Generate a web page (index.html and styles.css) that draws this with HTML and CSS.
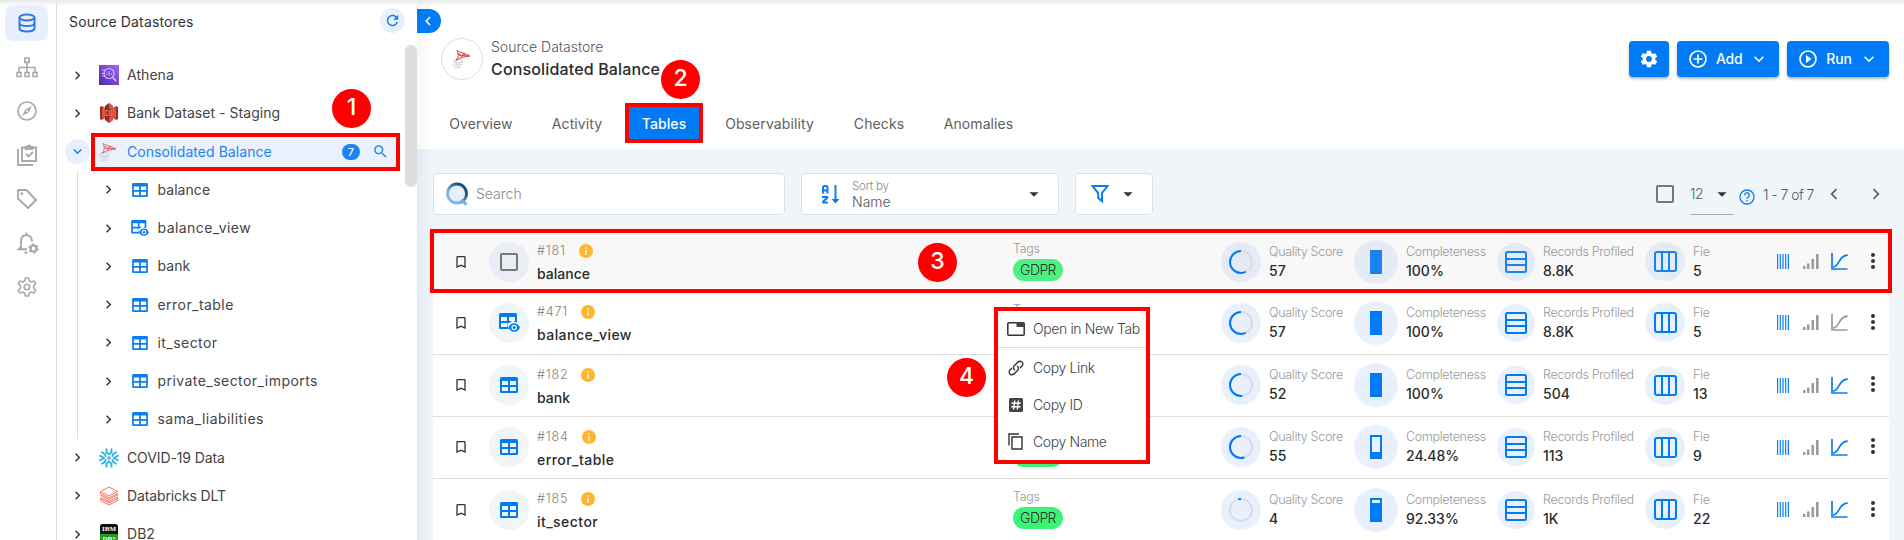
FILE: index.html
```html
<!DOCTYPE html>
<html lang="en">
<head>
<meta charset="utf-8">
<title>Consolidated Balance - Tables</title>
<link rel="stylesheet" href="styles.css">
</head>
<body>
<svg class="defs" aria-hidden="true">
  <symbol id="right" viewBox="0 0 24 24"><path d="M8.59,16.58L13.17,12L8.59,7.41L10,6L16,12L10,18Z"/></symbol>
  <symbol id="left" viewBox="0 0 24 24"><path d="M15.41,16.58L10.83,12L15.41,7.41L14,6L8,12L14,18Z"/></symbol>
  <symbol id="down" viewBox="0 0 24 24"><path d="M7.41,8.58L12,13.17L16.59,8.58L18,10L12,16L6,10Z"/></symbol>
  <symbol id="caret" viewBox="0 0 24 24"><path d="M7,10L12,15L17,10Z"/></symbol>
  <symbol id="cog" viewBox="0 0 24 24"><path d="M12,15.5A3.5,3.5 0 0,1 8.5,12A3.5,3.5 0 0,1 12,8.5A3.5,3.5 0 0,1 15.5,12A3.5,3.5 0 0,1 12,15.5M19.43,12.97C19.47,12.65 19.5,12.33 19.5,12C19.5,11.67 19.47,11.34 19.43,11L21.54,9.37C21.73,9.22 21.78,8.95 21.66,8.73L19.66,5.27C19.54,5.05 19.27,4.96 19.05,5.05L16.56,6.05C16.04,5.66 15.5,5.32 14.87,5.07L14.5,2.42C14.46,2.18 14.25,2 14,2H10C9.75,2 9.54,2.18 9.5,2.42L9.13,5.07C8.5,5.32 7.96,5.66 7.44,6.05L4.95,5.05C4.73,4.96 4.46,5.05 4.34,5.27L2.34,8.73C2.21,8.95 2.27,9.22 2.46,9.37L4.57,11C4.53,11.34 4.5,11.67 4.5,12C4.5,12.33 4.53,12.65 4.57,12.97L2.46,14.63C2.27,14.78 2.21,15.05 2.34,15.27L4.34,18.73C4.46,18.95 4.73,19.03 4.95,18.95L7.44,17.94C7.96,18.34 8.5,18.68 9.13,18.93L9.5,21.58C9.54,21.82 9.75,22 10,22H14C14.25,22 14.46,21.82 14.5,21.58L14.87,18.93C15.5,18.67 16.04,18.34 16.56,17.94L19.05,18.95C19.27,19.03 19.54,18.95 19.66,18.73L21.66,15.27C21.78,15.05 21.73,14.78 21.54,14.63L19.43,12.97Z"/></symbol>
  <symbol id="magnify" viewBox="0 0 24 24"><path d="M9.5,3A6.5,6.5 0 0,1 16,9.5C16,11.11 15.41,12.59 14.44,13.73L14.71,14H15.5L20.5,19L19,20.5L14,15.5V14.71L13.73,14.44C12.59,15.41 11.11,16 9.5,16A6.5,6.5 0 0,1 3,9.5A6.5,6.5 0 0,1 9.5,3M9.5,5C7,5 5,7 5,9.5C5,12 7,14 9.5,14C12,14 14,12 14,9.5C14,7 12,5 9.5,5Z"/></symbol>
  <symbol id="refresh" viewBox="0 0 24 24"><path d="M17.65,6.35C16.2,4.9 14.21,4 12,4A8,8 0 0,0 4,12A8,8 0 0,0 12,20C15.73,20 18.84,17.45 19.73,14H17.65C16.83,16.33 14.61,18 12,18A6,6 0 0,1 6,12A6,6 0 0,1 12,6C13.66,6 15.14,6.69 16.22,7.78L13,11H20V4L17.65,6.35Z"/></symbol>
  <symbol id="bookmark" viewBox="0 0 24 24"><path d="M17,18L12,15.82L7,18V5H17M17,3H7A2,2 0 0,0 5,5V21L12,18L19,21V5C19,3.89 18.1,3 17,3Z"/></symbol>
  <symbol id="table" viewBox="0 0 18 16"><path fill-rule="evenodd" d="M1.5,0H16.500A1.500,1.500 0 0,1 18,1.500V14.500A1.500,1.500 0 0,1 16.500,16H1.500A1.500,1.500 0 0,1 0,14.500V1.500A1.500,1.500 0 0,1 1.500,0ZM2,4V8H8V4ZM10,4V8H16V4ZM2,10V14H8V10ZM10,10V14H16V10Z"/></symbol>
  <symbol id="view" viewBox="0 0 21 19"><path fill-rule="evenodd" d="M1.5,0H16.500A1.500,1.500 0 0,1 18,1.500V9.500C17,9 16,8.800 15,8.800V8H16V4H10V8H13L10,10H8.500V14H9L10,16H1.500A1.500,1.500 0 0,1 0,14.500V1.500A1.500,1.500 0 0,1 1.500,0ZM2,4V8H8V4ZM2,10V14H8V10Z"/><path fill-rule="evenodd" d="M15.200,10.200C12.600,10.200 10.400,11.900 9.400,14.500C10.400,17.100 12.600,18.800 15.200,18.800S20,17.100 21,14.500C20,11.900 17.800,10.200 15.200,10.200M15.200,17.300A2.800,2.800 0 1,1 15.200,11.700A2.800,2.800 0 0,1 15.200,17.300"/><circle cx="15.200" cy="14.500" r="1.500"/></symbol>
  <symbol id="box" viewBox="0 0 18 18"><rect x="1" y="1" width="16" height="16" rx="1" fill="none" stroke="currentColor" stroke-width="2"/></symbol>
  <symbol id="info" viewBox="0 0 14 14"><circle cx="7" cy="7" r="7"/><path fill="#fff" d="M6.300,3.300h1.400v1.500H6.300zM6.300,6.100h1.400v4.600H6.300z"/></symbol>
  <symbol id="records" viewBox="0 0 22 22"><g fill="none" stroke="currentColor" stroke-width="2"><rect x="1" y="1" width="20" height="20" rx="1.500"/><path d="M1,8H21M1,14H21"/></g></symbol>
  <symbol id="fields" viewBox="0 0 23 21"><g fill="none" stroke="currentColor" stroke-width="2"><rect x="1" y="1" width="21" height="19" rx="2"/><path d="M8,1V20M15,1V20"/></g></symbol>
  <symbol id="bars" viewBox="0 0 12 15"><path fill="none" stroke="currentColor" stroke-width="1.200" d="M.6,0V15M3.300,0V15M6,0V15M8.700,0V15M11.400,0V15"/></symbol>
  <symbol id="signal" viewBox="0 0 16 15"><path d="M0,12h2.500v3H0zM4,9.500h2.500V15H4zM8.500,5H11V15H8.500zM13,0h2.600v15H13z"/></symbol>
  <symbol id="chart" viewBox="0 0 17 17"><path fill="none" stroke="currentColor" stroke-width="1.700" d="M1,0V16H16.500M2,14C8.500,14 7.500,2.200 16.800,2.200"/></symbol>
  <symbol id="dots" viewBox="0 0 4 16"><circle cx="2" cy="2" r="2"/><circle cx="2" cy="8" r="2"/><circle cx="2" cy="14" r="2"/></symbol>
  <symbol id="mssql" viewBox="0 0 20 20"><g fill="none" stroke="#c9cdd0"><ellipse cx="6" cy="12" rx="4" ry="2"/><path stroke-dasharray="2 .8" d="M2,12.500C2,14 1,17 2,18S7,19.500 9,17.500C10,16 10,14 10.500,12M4,14L5.500,18M3,16.500L8,15M6.500,19L8.500,13.500"/></g><path fill="none" stroke="#d6454b" stroke-width="1" d="M5,1.500C8,3.500 13,4 18,7C13,7.500 8,8.500 4,11.500C7,8 6.500,4.500 5,1.500ZM7,4L10,8L11,4.200L14,7.500M6,6L17,7"/></symbol>
  <symbol id="snow" viewBox="0 0 20 20"><g fill="none" stroke="#29b5e8" stroke-width="1.900" stroke-linecap="round" stroke-linejoin="round"><path d="M7.500,1.200V4.500L10,6.300L12.500,4.500V1.200M7.500,18.800V15.500L10,13.700L12.500,15.500V18.800M1.200,7.800L5,10L1.200,12.200M18.800,7.800L15,10L18.800,12.200M3,4.200L6,6.200L6.500,8M17,4.200L14,6.200L13.500,8M3,15.800L6,13.800L6.500,12M17,15.800L14,13.800L13.500,12"/></g><rect x="8.900" y="8.900" width="2.200" height="2.200" transform="rotate(45 10 10)" fill="none" stroke="#29b5e8"/></symbol>
</svg>
<div class="app">
  <nav class="rail">
    <a class="rail-item active"><svg width="18" height="20" viewBox="0 0 18 20"><g fill="none" stroke="currentColor" stroke-width="2"><ellipse cx="9" cy="4.500" rx="7.500" ry="3"/><path d="M1.500,4.500V15.500C1.500,17.200 4.800,18.500 9,18.500S16.500,17.200 16.500,15.500V4.500M1.500,10C1.500,11.800 4.800,13 9,13S16.500,11.800 16.500,10"/></g></svg></a>
    <a class="rail-item"><svg width="22" height="21" viewBox="0 0 22 21"><path fill="none" stroke="currentColor" stroke-width="1.600" d="M8.800,1h4.400v4.400H8.800zM1,15.500h4v4H1zM9,15.500h4v4H9zM17,15.500h4v4h-4zM11,5.500V15.500M3,15.500V10.500H19V15.500"/></svg></a>
    <a class="rail-item"><svg width="20" height="20" viewBox="0 0 20 20"><circle cx="10" cy="10" r="9" fill="none" stroke="currentColor" stroke-width="1.700"/><path fill-rule="evenodd" d="M15,5L11.600,11.600L5,15L8.400,8.400ZM10,9A1,1 0 1,0 10,11A1,1 0 0,0 10,9"/></svg></a>
    <a class="rail-item"><svg width="20" height="22" viewBox="0 0 20 22"><g fill="none" stroke="currentColor" stroke-width="1.900"><path d="M8.500,3.500H5V17H19V3.500H15.500M1,5V21H16M9,9.800L11.500,12.300L16,7.800"/><rect x="8.700" y="3" width="6.600" height="2"/><path d="M10.500,3A1.500,1.500 0 0,1 13.500,3"/></g></svg></a>
    <a class="rail-item"><svg width="20" height="20" viewBox="0 0 20 20"><path fill="none" stroke="currentColor" stroke-width="1.900" stroke-linejoin="round" d="M1,1H9.500L19,11L11,19L1,9.500Z"/><circle cx="4.700" cy="4.700" r="1.400"/></svg></a>
    <a class="rail-item bell"><svg width="22" height="22" viewBox="0 0 22 22"><path fill="none" stroke="currentColor" stroke-width="1.900" d="M10,17.300H1.800L4,15V9C4,5 6.200,3.200 9.500,3.200S14.800,5.500 15,9.500M9.500,3V.5M7.800,19.500C8.200,20.800 9.500,21.200 10.500,20.500"/><circle cx="16.500" cy="16.500" r="3" fill="none" stroke="currentColor" stroke-width="2.200"/><circle cx="16.500" cy="16.500" r="4.400" fill="none" stroke="currentColor" stroke-width="1.500" stroke-dasharray="2.300 2.300"/></svg></a>
    <a class="rail-item"><svg width="20" height="20" viewBox="1.500 1.500 21 21"><path fill="none" stroke="currentColor" stroke-width="1.700" stroke-linejoin="round" d="M10.300,2.600H13.700L14.300,5.500L16.500,6.800L19.500,5.800L21.200,8.600L19,10.600V13.400L21.200,15.400L19.500,18.200L16.500,17.200L14.300,18.500L13.700,21.400H10.300L9.700,18.500L7.500,17.200L4.500,18.200L2.800,15.400L5,13.400V10.600L2.800,8.600L4.500,5.800L7.500,6.800L9.700,5.500Z"/><circle cx="12" cy="12" r="2.900" fill="none" stroke="currentColor" stroke-width="1.700"/></svg></a>
  </nav>

  <aside class="side">
    <div class="side-head"><span class="side-title">Source Datastores</span><span class="round"><svg width="17" height="17"><use href="#refresh"/></svg></span></div>
    <div class="tree">
      <div class="node"><svg class="chev"><use href="#right"/></svg><svg class="logo" viewBox="0 0 20 20"><defs><linearGradient id="ath" x1="0" y1="1" x2="1" y2="0"><stop offset="0" stop-color="#4d27a8"/><stop offset="1" stop-color="#a166ff"/></linearGradient></defs><path fill="url(#ath)" d="M0,0H20V20H0z"/><g fill="none" stroke="#d9c8ff"><circle cx="10" cy="8.500" r="5" stroke-width="1.100"/><path stroke-width="1.600" d="M13.700,12.500L17,16"/><path stroke-width=".8" d="M3,5H6M2.500,8.500H6M3,11H6M8,10V7.500M10,11V6M12,10V8"/></g></svg><span>Athena</span></div>
      <div class="node"><svg class="chev"><use href="#right"/></svg><svg class="logo" viewBox="0 0 20 20"><path fill="#8c3123" d="M1,4L3,3V17L1,16zM19,4L17,3V17L19,16z"/><path fill="#e05243" d="M3,3L7,5V15L3,17zM17,3L13,5V15L17,17z"/><path fill="#8c3123" d="M6,3L10,0L14,3V7L10,8L6,7zM6,17L10,20L14,17V13L10,12L6,13z"/><path fill="#e05243" d="M10,0L14,3V7L10,6zM10,20L14,17V13L10,14zM6.500,7.500L10,8.200L13.500,7.500V12.500L10,11.800L6.500,12.500z"/><path fill="#b0392b" d="M6.500,8L10,8.400V11.600L6.500,12z"/></svg><span>Bank Dataset - Staging</span></div>
      <div class="node open"><span class="round"><svg class="chev"><use href="#down"/></svg></span><div class="selected"><svg class="logo faint"><use href="#mssql"/></svg><span>Consolidated Balance</span><b class="count">7</b><svg class="find"><use href="#magnify"/></svg><i class="step step-1">1</i></div></div>
      <div class="children">
        <div class="node"><svg class="chev"><use href="#right"/></svg><svg class="tbl"><use href="#table"/></svg><span>balance</span></div>
        <div class="node"><svg class="chev"><use href="#right"/></svg><svg class="tbl vw"><use href="#view"/></svg><span class="wide">balance_view</span></div>
        <div class="node"><svg class="chev"><use href="#right"/></svg><svg class="tbl"><use href="#table"/></svg><span>bank</span></div>
        <div class="node"><svg class="chev"><use href="#right"/></svg><svg class="tbl"><use href="#table"/></svg><span class="wide">error_table</span></div>
        <div class="node"><svg class="chev"><use href="#right"/></svg><svg class="tbl"><use href="#table"/></svg><span class="wide">it_sector</span></div>
        <div class="node"><svg class="chev"><use href="#right"/></svg><svg class="tbl"><use href="#table"/></svg><span class="wide">private_sector_imports</span></div>
        <div class="node"><svg class="chev"><use href="#right"/></svg><svg class="tbl"><use href="#table"/></svg><span class="wide">sama_liabilities</span></div>
      </div>
      <div class="node"><svg class="chev"><use href="#right"/></svg><svg class="logo"><use href="#snow"/></svg><span class="tight">COVID-19 Data</span></div>
      <div class="node"><svg class="chev"><use href="#right"/></svg><svg class="logo" viewBox="0 0 20 20"><path fill="none" stroke="#ff6f61" stroke-width="1" stroke-linejoin="round" d="M1.500,5.500L10,1L18.500,5.500L10,10ZM1.500,5.500V7.500L10,12L18.500,7.500V9.500M1.500,9L10,13.500L18.500,9M1.500,11L10,15.500L18.500,11V13M1.500,12.500V14.500L10,19L18.500,14.500V12.500L10,17L1.500,12.500"/></svg><span class="tight">Databricks DLT</span></div>
      <div class="node"><svg class="chev"><use href="#right"/></svg><span class="logo db2"><b>IBM</b><b>DB2</b></span><span>DB2</span></div>
    </div>
    <div class="scrollbar"></div>
  </aside>

  <main class="main">
    <header class="head">
      <button class="collapse"><svg width="18" height="18"><use href="#left"/></svg></button>
      <div class="title-row">
        <div class="avatar"><svg width="20" height="20"><use href="#mssql"/></svg></div>
        <div class="titles"><div class="kind">Source Datastore</div><h1>Consolidated Balance<i class="step step-2">2</i></h1></div>
        <div class="actions">
          <button class="btn gear"><svg width="20" height="20"><use href="#cog"/></svg></button>
          <button class="btn"><svg width="18" height="18" viewBox="0 0 18 18"><g fill="none" stroke="#fff" stroke-width="1.700"><circle cx="9" cy="9" r="8"/><path d="M9,4.500V13.500M4.500,9H13.500"/></g></svg><span>Add</span><svg width="20" height="20"><use href="#down"/></svg></button>
          <button class="btn"><svg width="18" height="18" viewBox="0 0 18 18"><circle cx="9" cy="9" r="8" fill="none" stroke="#fff" stroke-width="1.700"/><path d="M7,5L12.500,9L7,13Z"/></svg><span>Run</span><svg width="20" height="20"><use href="#down"/></svg></button>
        </div>
      </div>
      <div class="tabs"><a>Overview</a><a>Activity</a><a class="on">Tables</a><a>Observability</a><a>Checks</a><a>Anomalies</a></div>
    </header>

    <section class="content">
      <div class="filters">
        <div class="field search"><svg width="24" height="24" viewBox="0 0 24 24"><defs><linearGradient id="q" x1="0" y1="1" x2="1" y2="0"><stop offset=".3" stop-color="#7db8e8"/><stop offset=".75" stop-color="#16507f"/></linearGradient></defs><circle cx="12" cy="11.500" r="9.500" fill="#e3f0fb" stroke="url(#q)" stroke-width="2.800"/><path stroke="#6fb0e6" stroke-width="3" d="M16,18L21.500,22.500"/></svg><span>Search</span></div>
        <div class="field sort"><svg width="18" height="19" viewBox="0 0 18 19"><g fill="none" stroke="#0a7cf5" stroke-width="2"><path d="M1,8.500V2.500Q1,1 2.500,1H4Q5.500,1 5.500,2.500V8.500M1,5.500H5.500M0,12H5.200V12.800L1.200,16.500V17.500H6"/><path d="M13.500,0V16"/></g><path fill="#0a7cf5" d="M9.500,14H17.500L13.500,18.500Z"/></svg><div class="sort-text"><small>Sort by</small><span>Name</span></div><svg class="caret"><use href="#caret"/></svg></div>
        <div class="field funnel"><svg width="18" height="18" viewBox="0 0 18 18"><path fill="none" stroke="#0a7cf5" stroke-width="2" d="M1.500,1H16.500L11,8V16.200L7.200,13V8Z"/></svg><svg class="caret"><use href="#caret"/></svg></div>
        <div class="pager">
          <svg class="box"><use href="#box"/></svg>
          <div class="size"><span>12</span><svg class="caret"><use href="#caret"/></svg></div>
          <svg class="help" width="16" height="16" viewBox="0 0 16 16"><g fill="none" stroke="#0a7cf5" stroke-width="1.300"><circle cx="8" cy="8" r="7"/><path d="M5.700,6.400A2.300,2.300 0 1,1 9.300,8Q8,8.700 8,10M8,11V12.500"/></g></svg>
          <span class="range">1 - 7 of 7</span>
          <svg class="prev"><use href="#left"/></svg><svg class="next"><use href="#right"/></svg>
        </div>
      </div>

      <div class="list">
        <div class="row hover">
          <svg class="mark"><use href="#bookmark"/></svg><span class="disc"><svg class="box"><use href="#box"/></svg></span>
          <div class="ident"><div class="id"><span>#181</span><svg><use href="#info"/></svg></div><div class="name">balance</div></div>
          <div class="tags"><small>Tags</small><span class="pill">GDPR</span></div>
          <span class="m quality"><svg viewBox="0 0 24 24"><circle cx="12" cy="12" r="11"/><circle class="val" cx="12" cy="12" r="11" pathLength="100" stroke-dasharray="57 100"/></svg></span><div class="mt"><small>Quality Score</small><b>57</b></div>
          <span class="m complete"><i class="gauge"><i style="height:100%"></i></i></span><div class="mt"><small>Completeness</small><b>100%</b></div>
          <span class="m records"><svg><use href="#records"/></svg></span><div class="mt"><small>Records Profiled</small><b>8.8K</b></div>
          <span class="m fields"><svg><use href="#fields"/></svg></span><div class="mt"><small>Fie</small><b>5</b></div>
          <div class="tools"><svg class="bars"><use href="#bars"/></svg><svg class="signal"><use href="#signal"/></svg><svg class="chart"><use href="#chart"/></svg><svg class="dots"><use href="#dots"/></svg></div>
          <i class="step step-3">3</i>
        </div>
        <div class="row">
          <svg class="mark"><use href="#bookmark"/></svg><span class="disc"><svg class="vw"><use href="#view"/></svg></span>
          <div class="ident"><div class="id"><span>#471</span><svg><use href="#info"/></svg></div><div class="name wide">balance_view</div></div>
          <div class="tags"><small>Tags</small><span class="pill">GDPR</span></div>
          <span class="m quality"><svg viewBox="0 0 24 24"><circle cx="12" cy="12" r="11"/><circle class="val" cx="12" cy="12" r="11" pathLength="100" stroke-dasharray="57 100"/></svg></span><div class="mt"><small>Quality Score</small><b>57</b></div>
          <span class="m complete"><i class="gauge"><i style="height:100%"></i></i></span><div class="mt"><small>Completeness</small><b>100%</b></div>
          <span class="m records"><svg><use href="#records"/></svg></span><div class="mt"><small>Records Profiled</small><b>8.8K</b></div>
          <span class="m fields"><svg><use href="#fields"/></svg></span><div class="mt"><small>Fie</small><b>5</b></div>
          <div class="tools"><svg class="bars"><use href="#bars"/></svg><svg class="signal"><use href="#signal"/></svg><svg class="chart off"><use href="#chart"/></svg><svg class="dots"><use href="#dots"/></svg></div>
        </div>
        <div class="row">
          <svg class="mark"><use href="#bookmark"/></svg><span class="disc"><svg class="tb"><use href="#table"/></svg></span>
          <div class="ident"><div class="id"><span>#182</span><svg><use href="#info"/></svg></div><div class="name">bank</div></div>
          <div class="tags"><small>Tags</small><span class="pill">GDPR</span></div>
          <span class="m quality"><svg viewBox="0 0 24 24"><circle cx="12" cy="12" r="11"/><circle class="val" cx="12" cy="12" r="11" pathLength="100" stroke-dasharray="52 100"/></svg></span><div class="mt"><small>Quality Score</small><b>52</b></div>
          <span class="m complete"><i class="gauge"><i style="height:100%"></i></i></span><div class="mt"><small>Completeness</small><b>100%</b></div>
          <span class="m records"><svg><use href="#records"/></svg></span><div class="mt"><small>Records Profiled</small><b>504</b></div>
          <span class="m fields"><svg><use href="#fields"/></svg></span><div class="mt"><small>Fie</small><b>13</b></div>
          <div class="tools"><svg class="bars"><use href="#bars"/></svg><svg class="signal"><use href="#signal"/></svg><svg class="chart"><use href="#chart"/></svg><svg class="dots"><use href="#dots"/></svg></div>
        </div>
        <div class="row">
          <svg class="mark"><use href="#bookmark"/></svg><span class="disc"><svg class="tb"><use href="#table"/></svg></span>
          <div class="ident"><div class="id"><span>#184</span><svg><use href="#info"/></svg></div><div class="name wide">error_table</div></div>
          <div class="tags"><small>Tags</small><span class="pill">GDPR</span></div>
          <span class="m quality"><svg viewBox="0 0 24 24"><circle cx="12" cy="12" r="11"/><circle class="val" cx="12" cy="12" r="11" pathLength="100" stroke-dasharray="55 100"/></svg></span><div class="mt"><small>Quality Score</small><b>55</b></div>
          <span class="m complete"><i class="gauge"><i style="height:24.48%"></i></i></span><div class="mt"><small>Completeness</small><b>24.48%</b></div>
          <span class="m records"><svg><use href="#records"/></svg></span><div class="mt"><small>Records Profiled</small><b>113</b></div>
          <span class="m fields"><svg><use href="#fields"/></svg></span><div class="mt"><small>Fie</small><b>9</b></div>
          <div class="tools"><svg class="bars"><use href="#bars"/></svg><svg class="signal"><use href="#signal"/></svg><svg class="chart"><use href="#chart"/></svg><svg class="dots"><use href="#dots"/></svg></div>
        </div>
        <div class="row">
          <svg class="mark"><use href="#bookmark"/></svg><span class="disc"><svg class="tb"><use href="#table"/></svg></span>
          <div class="ident"><div class="id"><span>#185</span><svg><use href="#info"/></svg></div><div class="name wide">it_sector</div></div>
          <div class="tags"><small>Tags</small><span class="pill">GDPR</span></div>
          <span class="m quality"><svg viewBox="0 0 24 24"><circle cx="12" cy="12" r="11"/><circle class="val" cx="12" cy="12" r="11" pathLength="100" stroke-dasharray="4 100"/></svg></span><div class="mt"><small>Quality Score</small><b>4</b></div>
          <span class="m complete"><i class="gauge"><i style="height:85%"></i></i></span><div class="mt"><small>Completeness</small><b>92.33%</b></div>
          <span class="m records"><svg><use href="#records"/></svg></span><div class="mt"><small>Records Profiled</small><b>1K</b></div>
          <span class="m fields"><svg><use href="#fields"/></svg></span><div class="mt"><small>Fie</small><b>22</b></div>
          <div class="tools"><svg class="bars"><use href="#bars"/></svg><svg class="signal"><use href="#signal"/></svg><svg class="chart"><use href="#chart"/></svg><svg class="dots"><use href="#dots"/></svg></div>
        </div>
        <div class="menu">
          <div class="item first"><svg width="18" height="14" viewBox="0 0 18 14"><rect x=".8" y=".8" width="16.400" height="12.400" rx="1" fill="none" stroke="#333" stroke-width="1.500"/><path d="M9.500,0H17V5H9.500z"/></svg><span>Open in New Tab</span></div>
          <div class="item"><svg width="16" height="16" viewBox="0 0 16 16"><g fill="none" stroke="#333" stroke-width="1.400" stroke-linecap="round"><path d="M6.500,9.800C5,8.500 5.200,6.800 6.300,5.700L9.800,2.200C11,1 12.800,1 14,2.100S15,5 13.800,6.200L12.500,7.500"/><path d="M9.500,6.200C11,7.500 10.800,9.200 9.700,10.300L6.200,13.800C5,15 3.200,15 2,13.900S1,11 2.200,9.800L3.500,8.500"/></g></svg><span>Copy Link</span></div>
          <div class="item"><svg width="14" height="14" viewBox="0 0 14 14"><rect width="14" height="14" rx="1.500"/><path stroke="#fff" stroke-width="1.400" d="M5.700,2.500L4.500,11.500M9.500,2.500L8.300,11.500M2.500,5.200H11.700M2.300,8.800H11.500"/></svg><span>Copy ID</span></div>
          <div class="item"><svg width="15" height="17" viewBox="0 0 15 17"><path fill="none" stroke="#333" stroke-width="1.400" d="M4,4H14V16H4zM1,12.500V1H11"/></svg><span>Copy Name</span></div>
          <i class="step step-4">4</i>
        </div>
      </div>
    </section>
  </main>
</div>
</body>
</html>
```
FILE: styles.css
```css
* { box-sizing: border-box; }
body { margin: 0; width: 1904px; height: 540px; overflow: hidden; background: #fff; color: #444; font: 14px/20px Inter, "Noto Sans", sans-serif; }
svg { display: block; flex: none; fill: currentColor; }
.defs { position: absolute; width: 0; height: 0; }
b, i, h1 { font-style: normal; }
button { border: 0; padding: 0; font: inherit; color: #fff; }
.app { display: flex; height: 540px; position: relative; }
.app::after { content: ""; position: absolute; inset: 0 0 auto 0; height: 6px; background: linear-gradient(#e9e9e9, rgba(255,255,255,0)); }

.rail { width: 57px; border-right: 1px solid #dcdcdc; padding: 5px 0 0 5px; display: flex; flex-direction: column; gap: 8px; flex: none; color: #a9a9a9; }
.rail-item { width: 43px; height: 36px; border-radius: 8px; display: flex; align-items: center; justify-content: center; }
.rail-item.active { background: #e9f0fd; color: #2f78e8; }
.rail-item.bell { padding-left: 2px; }

.side { width: 360px; flex: none; position: relative; overflow: hidden; }
.side-head { height: 56px; padding: 8px 12px 0; display: flex; justify-content: space-between; align-items: flex-start; }
.side-title { line-height: 28px; color: #333; letter-spacing: .15px; }
.round { width: 25px; height: 25px; border-radius: 50%; background: #e9f0fd; color: #0a7cf5; display: flex; align-items: center; justify-content: center; flex: none; }
.tree { letter-spacing: .05px; }
.wide { letter-spacing: .45px; }
.tight { letter-spacing: -.12px; }
.node { height: 38.250px; display: flex; align-items: center; padding-left: 12px; }
.node > .chev { margin: 0 13px 0 0; }
.chev { width: 17px; height: 17px; color: #333; }
.logo { width: 20px; height: 20px; margin-right: 8px; flex: none; }
.open { padding-left: 8px; }
.open .round .chev { color: #0a7cf5; }
.selected { display: flex; align-items: center; width: 309px; height: 38px; margin-left: 1px; border: 4px solid #f00; background: #eaf1fd; color: #1a84f2; position: relative; padding-left: 3px; }
.selected span { margin-left: 1px; }
.faint { opacity: .8; }
.count { margin-left: auto; width: 18px; height: 16px; border-radius: 8px; background: #1a84f2; color: #fff; font-size: 11px; line-height: 16px; text-align: center; font-weight: 500; }
.find { width: 17px; height: 17px; margin: 0 7px 0 12px; }
.children { margin-left: 20px; border-left: 1px solid #dcdcdc; height: 267.750px; }
.children .node { padding-left: 22px; }
.children .node > .chev { margin-right: 15px; }
.tbl { width: 16px; height: 14px; color: #0a7cf5; margin-right: 9.500px; }
.tbl.vw { width: 18px; height: 16px; margin: 0 8.500px 0 -1px; }
.db2 { background: #1aa01a; border-radius: 3px; overflow: hidden; width: 18px; margin: 0 9px 0 1px; color: #fff; text-align: center; letter-spacing: 0; }
.db2 b { display: block; font: 700 7px/10px "Liberation Serif", serif; }
.db2 b:first-child { background: #111; }
.scrollbar { position: absolute; right: 0; top: 45px; width: 12px; height: 142px; border-radius: 6px; background: #dcdcdc; }

.main { flex: 1; min-width: 0; background: linear-gradient(90deg, #e6eaf3, #f0f5fa 16px); display: flex; flex-direction: column; }
.head { height: 149px; background: linear-gradient(90deg, #f7f7f7, #fff 12px); position: relative; padding: 38px 15px 0 24px; flex: none; }
.collapse { position: absolute; left: 0; top: 9px; width: 24px; height: 24px; border-radius: 0 12px 12px 0; background: #007bf5; display: flex; align-items: center; justify-content: center; padding-right: 2px; }
.title-row { display: flex; }
.avatar { width: 42px; height: 42px; border-radius: 50%; border: 1px solid #ddd; background: #fff; display: flex; align-items: center; justify-content: center; margin-right: 8px; }
.kind { line-height: 18px; color: #555; font-weight: 300; }
h1 { margin: 3px 0 0; font-size: 16px; line-height: 21px; font-weight: 500; color: #2b2b2b; position: relative; letter-spacing: .15px; }
.actions { margin: 3px 0 0 auto; display: flex; gap: 8px; }
.btn { width: 102px; height: 36px; border-radius: 4px; background: #007bf5; box-shadow: 0 2px 3px rgba(0,0,0,.28); display: flex; align-items: center; padding-left: 12px; font-weight: 500; letter-spacing: -.2px; }
.btn span { width: 26px; margin: 0 7px 0 9px; }
.btn.gear { width: 40px; padding-left: 10px; }
.tabs { display: flex; margin-top: 23px; font-weight: 400; color: #606060; }
.tabs a { height: 40px; line-height: 42px; text-align: center; letter-spacing: .1px; }
.tabs a:nth-child(1) { width: 96px; margin-left: -8px; }
.tabs a:nth-child(2) { width: 96px; }
.tabs a.on { width: 78px; border: 4px solid #f00; background: #007bf5; color: #fff; line-height: 34px; font-weight: 500; }
.tabs a:nth-child(4) { width: 133px; }
.tabs a:nth-child(5) { width: 86px; }
.tabs a:nth-child(6) { width: 113px; }

.content { padding: 24px 15px 0 16px; flex: 1; min-height: 0; }
.filters { display: flex; gap: 16px; height: 42px; }
.field { border: 1px solid #dfe2e5; border-radius: 4px; background: #fff; display: flex; align-items: center; height: 42px; }
.caret { width: 22px; height: 22px; color: #333; }
.search { width: 352px; padding-left: 11px; color: #888; font-weight: 300; gap: 7px; }
.sort { width: 258px; padding: 0 13px 0 20px; gap: 12px; font-weight: 300; color: #555; }
.sort .caret { margin-left: auto; }
.sort-text small, .sort-text span { display: block; line-height: 15px; }
.sort-text small { font-size: 11.500px; color: #888; letter-spacing: -.2px; }
.funnel { width: 78px; padding-left: 15px; gap: 8px; }
.pager { margin-left: auto; display: flex; align-items: center; font-weight: 300; color: #555; padding-right: 2px; }
.box { width: 18px; height: 18px; color: #777; }
.size { width: 44px; height: 41px; border-bottom: 1px solid #a9adb0; display: flex; align-items: center; justify-content: space-between; margin: 0 5px 0 16px; letter-spacing: -.5px; }
.size .caret { margin-right: 1px; }
.help { margin-top: 5px; }
.range { width: 60px; margin: 2px 0 0 8px; white-space: nowrap; letter-spacing: -.55px; }
.prev, .next { width: 22px; height: 22px; color: #666; }
.next { margin-left: 20px; }

.list { margin-top: 15px; position: relative; background: #fff; }
.row { height: 62.250px; display: flex; align-items: center; border-bottom: 1px solid #ddd; padding-left: 20px; position: relative; }
.row.hover { margin: -1px -3px -.25px; height: 63.500px; padding: 2px 0 0 19px; border: 4px solid #f00; background: #f8f8f8; }
.mark { width: 16px; height: 16px; color: #333; margin-right: 20px; }
.disc { width: 40px; height: 40px; border-radius: 50%; background: #f0f5fa; color: #007bf5; display: flex; align-items: center; justify-content: center; margin-right: 8px; flex: none; }
.hover .disc { background: #eaedf3; }
.tb { width: 18px; height: 16px; }
.vw { width: 21px; height: 19px; }
.ident { width: 476px; padding-top: 4px; }
.hover .ident { padding-top: 4px; }
.id { display: flex; align-items: center; gap: 13px; font-size: 12.500px; font-weight: 300; color: #808080; height: 16px; letter-spacing: .8px; }
.id svg { width: 14px; height: 14px; color: #ffb52e; }
.name { margin-top: 5px; font-weight: 500; line-height: 20px; color: #2b2b2b; }
small { display: block; font-size: 12.500px; font-weight: 300; line-height: 18px; color: #999; white-space: nowrap; letter-spacing: -.3px; }
.tags { width: 208px; height: 43px; }
.pill { display: block; width: 50px; height: 22px; margin-top: 1px; border-radius: 11px; background: #3df276; line-height: 22px; text-align: center; color: #333; font-weight: 300; letter-spacing: -.6px; }
.hover .pill { background: #4ff083; }
.m { display: flex; align-items: center; justify-content: center; border-radius: 50%; background: #e9f0fd; color: #007bf5; flex: none; width: 40px; height: 40px; }
.hover .m { background: #e4ebf5; color: #1782f0; }
.quality { margin-right: 8px; }
.quality svg { width: 24px; height: 24px; fill: none; stroke: #dcdcdc; stroke-width: 2; }
.quality .val { stroke: #007bf5; transform: matrix(0,-1,-1,0,24,24); }
.complete { width: 44px; height: 44px; margin-right: 8px; }
.gauge { width: 12px; height: 24px; border: 2px solid currentColor; display: flex; align-items: flex-end; }
.gauge i { width: 100%; background: currentColor; }
.records { width: 38px; height: 38px; margin-right: 8px; }
.records svg { width: 22px; height: 22px; }
.fields { height: 39px; margin-right: 8px; }
.fields svg { width: 23px; height: 21px; }
.mt { height: 40px; width: 85px; white-space: nowrap; padding-top: 1px; }
.complete + .mt { width: 91px; }
.records + .mt { width: 102px; }
.fields + .mt { width: 84px; }
.mt b { display: block; font-weight: 500; line-height: 20px; color: #2b2b2b; }
.tools { display: flex; align-items: center; color: #0a7cf5; }
.bars { width: 12px; height: 15px; }
.signal { width: 16px; height: 15px; margin-left: 14px; color: #9a9a9a; }
.chart { width: 17px; height: 17px; margin-left: 12px; }
.chart.off { color: #9a9a9a; }
.dots { width: 4px; height: 16px; margin: -2px 0 0 23px; color: #333; }

.menu { position: absolute; left: 561px; top: 78px; width: 156px; height: 157px; border: 4px solid #f00; background: #fff; color: #444; font-weight: 300; letter-spacing: -.38px; }
.item { height: 37px; display: flex; align-items: center; }
.item.first { height: 37px; border-bottom: 1px solid #ddd; margin-bottom: 1px; }
.item svg { margin: 0 auto; }
.item span { width: 113px; white-space: nowrap; }

.step { position: absolute; width: 39px; height: 39px; border-radius: 50%; background: #f00; color: #fff; font: 500 23px/37px Inter, sans-serif; text-align: center; letter-spacing: 0; z-index: 2; }
.step-1 { left: 237px; top: -48px; }
.step-2 { left: 170px; top: 1px; }
.step-3 { left: 484px; top: 10px; }
.step-4 { left: -51px; top: 47px; }
```
